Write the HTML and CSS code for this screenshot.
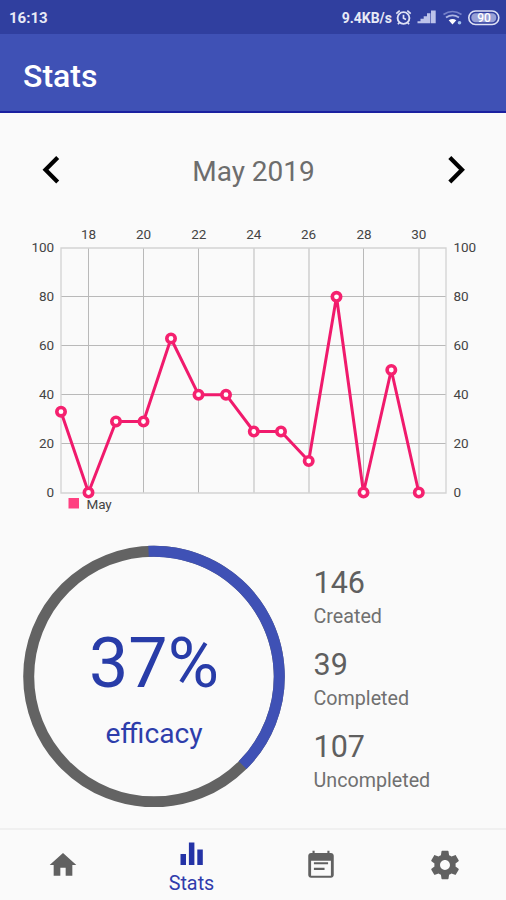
FILE: index.html
```html
<!DOCTYPE html>
<html lang="en">
<head>
<meta charset="utf-8">
<title>Stats</title>
<link rel="stylesheet" href="styles.css">
</head>
<body>
<div class="app">
  <div class="status">
    <span class="time">16:13</span>
    <span class="speed">9.4KB/s</span>
    <svg class="status-icons" width="111" height="34" viewBox="0 0 111 34" fill="none" stroke="#dfe2f5">
      <circle cx="8.500" cy="18" r="5.900" stroke-width="1.900"/>
      <path d="M8.500 14.800V18.300l2.500 1.300M1.300 13.600l3.400-3M15.700 13.600l-3.400-3M4.500 22.500l-1.600 1.800M12.500 22.500l1.600 1.800" stroke-width="1.700"/>
      <path d="M22.500 23.300v-2h3.400v2zM25.500 23.300v-4.500h3.400v4.500zM28.700 23.300v-7h3.400v7zM32 23.300v-10h3.400v10zM36 23.300V10.500h4.700v12.800z" fill="#bdc3ea" stroke="none"/>
      <path d="M48.500 14.500q9-6 18 0" stroke="#7782c9" stroke-width="1.700"/>
      <path d="M51 17.600q6.500-4.500 13 0" stroke="#aeb6e3" stroke-width="1.800"/>
      <path d="M53.700 20.200q3.800-2.600 7.600 0l-3.800 4.200z" fill="#fff" stroke="none"/>
      <circle cx="64.500" cy="22.800" r="1.800" fill="#a4c4ee" stroke="none"/>
      <rect x="73.800" y="11" width="30" height="13.500" rx="6.700" stroke-width="1.600"/>
      <rect x="76.300" y="13.300" width="25" height="8.900" rx="4.200" fill="#98a1d6" stroke="none"/>
      <text x="89" y="22" text-anchor="middle" class="battery">90</text>
    </svg>
  </div>
  <header class="bar"><h1>Stats</h1></header>
  <main>
    <div class="month">
      <svg width="20" height="30" viewBox="0 0 20 30"><path d="M17.700 2.500 5.500 14.800l12.200 12.300" class="chevron"/></svg>
      <span>May 2019</span>
      <svg width="20" height="30" viewBox="0 0 20 30"><path d="M2.800 2.500 15 14.800 2.800 27.100" class="chevron"/></svg>
    </div>
    <svg class="chart" width="506" height="300" viewBox="0 220 506 300">
      <path class="grid" d="M61 296.500H446M61 345.500H446M61 394.500H446M61 443.500H446M88.500 248V493M143.500 248V493M198.500 248V493M254 248V493M309 248V493M363.500 248V493M419 248V493"/>
      <path class="frame" d="M61 248H446V493H61z"/>
      <g text-anchor="middle">
        <text x="88.500" y="239">18</text><text x="143.500" y="239">20</text><text x="198.800" y="239">22</text><text x="253.800" y="239">24</text><text x="308.500" y="239">26</text><text x="364" y="239">28</text><text x="418.800" y="239">30</text>
      </g>
      <g text-anchor="end">
        <text x="54" y="252">100</text><text x="54" y="301">80</text><text x="54" y="350">60</text><text x="54" y="399">40</text><text x="54" y="448">20</text><text x="54" y="497">0</text>
      </g>
      <g>
        <text x="453.500" y="252">100</text><text x="453.500" y="301">80</text><text x="453.500" y="350">60</text><text x="453.500" y="399">40</text><text x="453.500" y="448">20</text><text x="453.500" y="497">0</text>
      </g>
      <rect x="68.500" y="498" width="10.500" height="10.500" fill="#ff4081"/>
      <text x="86.500" y="509">May</text>
      <polyline class="line" points="61,411.700 88.500,492.500 116,421.500 143.500,421.500 171,338.500 198.500,394.700 226,394.700 253.800,431.500 281,431.500 308.700,461 336.500,296.800 363.500,492.500 391.300,370 418.800,492.500"/>
      <g class="dots">
        <circle cx="61" cy="411.700" r="4.200"/><circle cx="88.500" cy="492.500" r="4.200"/><circle cx="116" cy="421.500" r="4.200"/><circle cx="143.500" cy="421.500" r="4.200"/><circle cx="171" cy="338.500" r="4.200"/><circle cx="198.500" cy="394.700" r="4.200"/><circle cx="226" cy="394.700" r="4.200"/><circle cx="253.800" cy="431.500" r="4.200"/><circle cx="281" cy="431.500" r="4.200"/><circle cx="308.700" cy="461" r="4.200"/><circle cx="336.500" cy="296.800" r="4.200"/><circle cx="363.500" cy="492.500" r="4.200"/><circle cx="391.300" cy="370" r="4.200"/><circle cx="418.800" cy="492.500" r="4.200"/>
      </g>
    </svg>
    <section class="summary">
      <svg width="262" height="262" viewBox="0 0 262 262">
        <circle cx="131" cy="131.500" r="125.300" fill="none" stroke="#636363" stroke-width="11"/>
        <circle cx="131" cy="131.500" r="125.300" fill="none" stroke="#3f51b5" stroke-width="11" pathLength="360" stroke-dasharray="137.500 222.500" transform="rotate(-92.500 131 131.500)"/>
        <text x="131" y="142" text-anchor="middle" class="percent">37%</text>
        <text x="131" y="198" text-anchor="middle" class="efficacy">efficacy</text>
      </svg>
      <dl>
        <div><dt>146</dt><dd>Created</dd></div>
        <div><dt>39</dt><dd>Completed</dd></div>
        <div><dt>107</dt><dd>Uncompleted</dd></div>
      </dl>
    </section>
  </main>
  <nav>
    <a class="home"><svg width="32" height="32" viewBox="0 0 24 24"><path d="M10 20v-6h4v6h5v-8h3L12 3 2 12h3v8z"/></svg></a>
    <a class="active"><svg width="32" height="32" viewBox="0 0 32 32"><path d="M4.500 16H10v11H4.500zM12.900 4.500h5.500V27h-5.500zM21.300 11.500h5.500V27h-5.500z"/></svg><span>Stats</span></a>
    <a class="agenda"><svg width="34" height="34" viewBox="0 0 24 24"><path d="M17 10H7v1.500h10zM19 3.500h-1V2h-1.500v1.500h-9V2H6v1.500H5c-1.100 0-2 .9-2 2V19c0 1.100.9 2 2 2h14c1.100 0 2-.9 2-2V5.500c0-1.100-.9-2-2-2zm0 16H5V9h14zM14.500 14H7v1.500h7.500z"/></svg></a>
    <a class="settings"><svg width="34" height="34" viewBox="0 0 24 24"><path d="M19.430 12.980c.04-.32.070-.64.070-.98s-.03-.66-.07-.98l2.110-1.650c.19-.15.240-.42.120-.64l-2-3.460c-.12-.22-.39-.3-.61-.22l-2.490 1c-.52-.4-1.080-.73-1.690-.98l-.38-2.650C14.460 2.180 14.250 2 14 2h-4c-.25 0-.46.180-.49.420l-.38 2.650c-.61.250-1.170.59-1.690.98l-2.490-1c-.23-.09-.49 0-.61.220l-2 3.460c-.13.220-.07.490.12.640l2.110 1.650c-.04.320-.07.650-.07.980s.03.660.07.980l-2.110 1.650c-.19.150-.24.420-.12.640l2 3.460c.12.220.39.300.61.220l2.490-1c.52.400 1.080.730 1.690.980l.38 2.650c.03.240.24.420.49.420h4c.25 0 .46-.18.490-.42l.38-2.650c.61-.25 1.170-.59 1.690-.98l2.490 1c.23.090.49 0 .61-.22l2-3.460c.12-.22.070-.49-.12-.64zM12 15.500c-1.930 0-3.500-1.570-3.500-3.500s1.570-3.500 3.500-3.500 3.500 1.570 3.500 3.500-1.570 3.500-3.500 3.500z"/></svg></a>
  </nav>
</div>
</body>
</html>
```
FILE: styles.css
```css
* { box-sizing: border-box; }
body { margin: 0; background: #fafafa; font-family: Roboto, "Liberation Sans", sans-serif; }
.app { width: 506px; height: 900px; display: flex; flex-direction: column; overflow: hidden; }
.status { height: 34px; background: #303f9f; color: #e8eaf6; display: flex; align-items: center; padding-left: 9px; }
.time { font-size: 15px; font-weight: 700; padding-top: 2px; }
.speed { margin-left: auto; font-size: 14px; font-weight: 700; padding-top: 1px; margin-right: 3px; }
.battery { font-size: 12px; font-weight: 500; fill: #fff; stroke: none; }
.bar { height: 79px; background: #3f51b5; border-bottom: 2px solid #1a20a0; display: flex; align-items: center; padding-left: 23px; }
h1 { margin: 0; color: #fff; font-size: 32px; font-weight: 500; line-height: 40px; padding-top: 6px; }
main { flex: 1; display: flex; flex-direction: column; }
.month { height: 107px; padding: 7px 39px 0 40px; display: flex; align-items: center; justify-content: space-between; font-size: 28px; color: #6d6d6d; }
.month span { padding-top: 3px; }
.chevron { fill: none; stroke: #000; stroke-width: 4.200px; }
.chart { display: block; font-size: 13.500px; fill: #444; }
.chart text { letter-spacing: -0.1px; }
.grid { stroke: #b9b9b9; stroke-width: 1px; fill: none; }
.frame { stroke: #d3d3d3; stroke-width: 1.300px; fill: none; }
.line { fill: none; stroke: #f01a6c; stroke-width: 3px; stroke-linejoin: round; }
.dots { fill: #fff; stroke: #f5216f; stroke-width: 3.600px; }
.summary { display: flex; padding: 25px 0 0 23px; }
.summary svg { flex: none; }
.percent { font-size: 70px; fill: #283ca8; }
.efficacy { font-size: 28.200px; fill: #2d3dab; }
dl { margin: 19px 0 0 28.500px; color: #5f5f5f; }
dl div { height: 82px; }
dt { font-size: 30.500px; line-height: 38px; }
dd { margin: 0; font-size: 19.700px; line-height: 29px; color: #707070; }
nav { height: 72px; border-top: 2px solid #f0f0f0; display: flex; fill: #616161; }
nav a { display: flex; flex-direction: column; align-items: center; width: 130px; padding-top: 18px; }
.home { width: 125px; padding-top: 19px; }
.active { width: 133px; padding-top: 8px; fill: #2433a6; color: #303cac; font-size: 19.800px; line-height: 24px; }
.active span { margin-top: 2px; }
.agenda { width: 126px; }
.settings { width: 122px; }
```
